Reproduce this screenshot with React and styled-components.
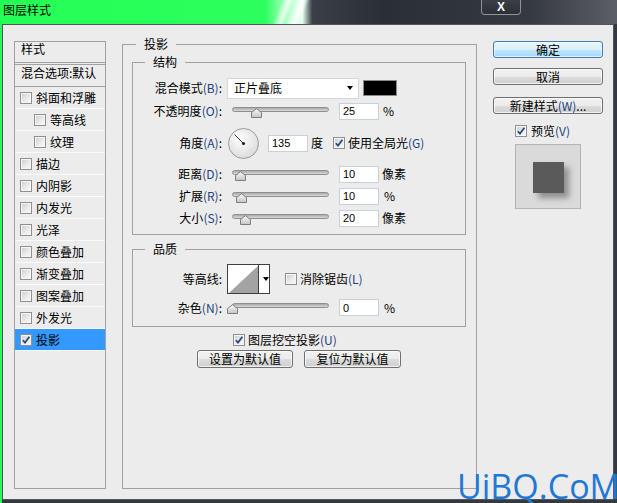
import React from 'react'
import styled, { createGlobalStyle } from 'styled-components'

const GlobalStyle = createGlobalStyle`
  html, body { margin: 0; padding: 0; background: #ececec; }
  body {
    font-family: "Noto Sans CJK SC", "Noto Sans", sans-serif;
    font-size: 12px;
    color: #000;
  }
`

const Window = styled.div`
  position: relative;
  width: 617px;
  height: 503px;
  display: flex;
  flex-direction: column;
  overflow: hidden;
  background: linear-gradient(to right, #2af55c 0 2px, #34383f 2px);
`

const TitleBar = styled.div`
  height: 24px;
  flex-shrink: 0;
  display: flex;
  align-items: flex-start;
  background:
    linear-gradient(112deg, transparent 0 45%, rgba(255,255,255,.75) 46.2%, transparent 47%, rgba(255,255,255,.9) 48.4%, transparent 49.4%),
    linear-gradient(to right, #24ff55 0, #2cff5d 43%, #9dffb6 46%, #e6fff0 49%, #3b3f46 50.6%, #2a2e35 62%, #353941 86%, #5c5f65 100%);
`

const Title = styled.div`
  padding: 3px 0 0 3px;
  line-height: 14px;
`

const CloseButton = styled.div`
  margin-left: auto;
  margin-right: 96px;
  width: 40px;
  height: 15px;
  box-sizing: border-box;
  border: 1px solid rgba(255,255,255,.45);
  border-top: none;
  border-radius: 0 0 4px 4px;
  background: linear-gradient(#3a3e45, #2b2f36);
  color: #fff;
  font: bold 12px "Liberation Sans", sans-serif;
  display: flex;
  align-items: center;
  justify-content: center;
`

const Body = styled.div`
  flex: 1;
  margin: 0 3px 3px 2px;
  border: 1px solid #50545b;
  background: #ececec;
  display: flex;
  gap: 16px;
  padding: 12px 10px 10px 11px;
  min-height: 0;
`

/* ---------- left list ---------- */

const StyleList = styled.div`
  width: 92px;
  margin-top: 4px;
  border: 1px solid #a0a0a0;
  box-sizing: border-box;
  display: flex;
  flex-direction: column;
`

const ListHeader = styled.div`
  height: 21px;
  box-sizing: border-box;
  border-bottom: 1px solid #a0a0a0;
  padding-left: 6px;
  line-height: 14px;
`

const BlendRow = styled.div`
  height: 23px;
  box-sizing: border-box;
  margin-top: 1px;
  border-top: 1px solid #a0a0a0;
  border-bottom: 1px solid #a0a0a0;
  padding: 1px 0 0 6px;
  line-height: 14px;
  white-space: nowrap;
  overflow: hidden;
`

const ListItem = styled.div`
  height: 22px;
  box-sizing: border-box;
  border-bottom: 1px solid #fafafa;
  display: flex;
  align-items: center;
  gap: 4px;
  padding-left: ${p => (p.$sub ? 19 : 5)}px;
  background: ${p => (p.$active ? '#3399ff' : 'transparent')};
  line-height: 14px;
`

/* ---------- checkbox ---------- */

const Box = styled.span`
  display: inline-flex;
  align-items: center;
  justify-content: center;
  width: 12px;
  height: 12px;
  box-sizing: border-box;
  flex-shrink: 0;
  border: 1px solid #8e8f8f;
  box-shadow: inset 0 0 0 1px #f6f6f6;
  background: linear-gradient(135deg, #c9ccd0 0%, #eceded 60%, #f7f7f7 100%);
`

const Checkbox = ({ checked }) => (
  <Box>
    {checked && (
      <svg width="10" height="10" viewBox="0 0 10 10">
        <path d="M1.8 5.2 L4 7.6 L8.4 1.8" fill="none" stroke="#27477d" strokeWidth="1.7" />
      </svg>
    )}
  </Box>
)

/* ---------- main panel ---------- */

const Group = styled.fieldset`
  margin: ${p => p.$mt || 0}px 0 0;
  padding: ${p => p.$pad || '0'};
  border: 1px solid #a0a0a0;
  min-width: 0;
  box-sizing: border-box;
`

const Legend = styled.legend`
  margin-left: ${p => p.$offset}px;
  padding: 0 8px;
  line-height: 14px;
  font-size: 12px;
`

const Main = styled(Group)`
  width: 355px;
  flex-shrink: 0;
`

const Row = styled.div`
  display: flex;
  align-items: center;
  height: ${p => p.$h || 22}px;
  line-height: 14px;
  white-space: nowrap;
`

const Label = styled.span`
  width: 89px;
  flex-shrink: 0;
  text-align: right;
  margin-right: 5px;
`

const Key = styled.span`
  color: #1f3f7a;
`

const Select = styled.div`
  width: 132px;
  height: 21px;
  box-sizing: border-box;
  border: 1px solid #d6d6d6;
  background: #fff;
  display: flex;
  align-items: center;
  padding: 0 5px 0 6px;
`

const Arrow = styled.span`
  margin-left: auto;
  width: 0;
  height: 0;
  border-left: 3px solid transparent;
  border-right: 3px solid transparent;
  border-top: 4px solid #000;
`

const Swatch = styled.div`
  width: 34px;
  height: 16px;
  box-sizing: border-box;
  margin-left: 4px;
  border: 1px solid #8a8a8a;
  background: #000;
`

const SliderWrap = styled.div`
  position: relative;
  width: 107px;
  height: 11px;
  flex-shrink: 0;
  margin-top: 2px;
`

const Track = styled.div`
  margin: 0 5px;
  height: 5px;
  box-sizing: border-box;
  border: 1px solid #8f8f8f;
  border-radius: 3px;
  background: linear-gradient(#a9a9a9, #dadada);
`

const Thumb = styled.svg`
  position: absolute;
  top: 1px;
`

const Slider = ({ pct }) => (
  <SliderWrap>
    <Track />
    <Thumb width="11" height="10" viewBox="0 0 11 10" style={{ left: 5 + pct * 0.97 - 5.5 }}>
      <defs>
        <linearGradient id="th" x1="0" y1="0" x2="0" y2="1">
          <stop offset="0" stopColor="#fbfbfb" />
          <stop offset="1" stopColor="#c4c4c4" />
        </linearGradient>
      </defs>
      <path d="M0.5 9.5 V4.5 L5.5 0.7 L10.5 4.5 V9.5 Z" fill="url(#th)" stroke="#7d7d7d" />
    </Thumb>
  </SliderWrap>
)

const Field = styled.input`
  width: 40px;
  height: 17px;
  box-sizing: border-box;
  margin-left: ${p => (p.$ml === undefined ? 5 : p.$ml)}px;
  border: 1px solid #c7d0dc;
  background: #fff;
  padding: 0 0 0 3px;
  font: 11px "Liberation Sans", sans-serif;
  color: #000;
  outline: none;
`

const Unit = styled.span`
  margin-left: ${p => p.$ml || 4}px;
`

const Dial = styled.svg`
  margin-left: 1px;
  flex-shrink: 0;
`

const CheckLabel = styled.label`
  display: flex;
  align-items: center;
  gap: 3px;
  margin-left: ${p => p.$ml || 0}px;
`

const Contour = styled.div`
  display: flex;
  height: 30px;
  box-sizing: border-box;
  border: 1px solid #3e3e3e;
  background: #fff;
`

const ContourArrow = styled.div`
  width: 10px;
  border-left: 1px solid #3e3e3e;
  display: flex;
  align-items: center;
  justify-content: center;
`

const KnockoutRow = styled(Row)`
  margin-top: 4px;
  padding-left: 101px;
`

const ButtonRow = styled.div`
  display: flex;
  justify-content: center;
  gap: 11px;
  margin-top: 1px;
`

const Button = styled.div`
  width: ${p => p.$w || 110}px;
  height: ${p => p.$h || 17}px;
  box-sizing: border-box;
  margin-top: ${p => p.$mt || 0}px;
  border: 1px solid ${p => (p.$primary ? '#3c7fb1' : '#707070')};
  border-radius: 3px;
  background: ${p =>
    p.$primary
      ? 'linear-gradient(#eaf6fd 0%, #d9f0fc 50%, #bee6fd 50%, #a7d9f5 100%)'
      : 'linear-gradient(#f2f2f2 0%, #ebebeb 50%, #dddddd 50%, #cfcfcf 100%)'};
  box-shadow: inset 0 0 0 1px ${p => (p.$primary ? 'rgba(255,255,255,.6)' : 'rgba(255,255,255,.7)')};
  display: flex;
  align-items: center;
  justify-content: center;
  line-height: 14px;
  white-space: nowrap;
`

/* ---------- right column ---------- */

const Side = styled.div`
  width: 110px;
  margin-top: 4px;
  display: flex;
  flex-direction: column;
`

const PreviewToggle = styled(CheckLabel)`
  margin: 10px 0 0 22px;
  height: 14px;
  gap: 4px;
  line-height: 14px;
`

const Preview = styled.div`
  margin: 6px 0 0 22px;
  width: 66px;
  height: 65px;
  box-sizing: border-box;
  border: 1px solid #b4b4b4;
  background: #dadada;
  display: flex;
  align-items: center;
  justify-content: center;
`

const PreviewSquare = styled.div`
  width: 31px;
  height: 31px;
  margin-top: 2px;
  background: #5a5a5a;
  box-shadow: 5px 5px 6px rgba(0, 0, 0, 0.35);
`

const Watermark = styled.div`
  position: absolute;
  left: 457px;
  top: 470px;
  font: 34px/33px "Open Sans", sans-serif;
  color: #1f78d6;
  white-space: nowrap;
`

const listItems = [
  { name: '斜面和浮雕' },
  { name: '等高线', sub: true },
  { name: '纹理', sub: true },
  { name: '描边' },
  { name: '内阴影' },
  { name: '内发光' },
  { name: '光泽' },
  { name: '颜色叠加' },
  { name: '渐变叠加' },
  { name: '图案叠加' },
  { name: '外发光' },
  { name: '投影', active: true },
]

const sliders = [
  { label: '距离', key: 'D', pct: 9, value: '10', unit: '像素' },
  { label: '扩展', key: 'R', pct: 10, value: '10', unit: '%' },
  { label: '大小', key: 'S', pct: 14, value: '20', unit: '像素' },
]

const Lbl = ({ text, k }) => (
  <Label>
    {text}
    {k && <Key>({k})</Key>}:
  </Label>
)

export default function App() {
  return (
    <Window>
      <GlobalStyle />
      <TitleBar>
        <Title>图层样式</Title>
        <CloseButton>X</CloseButton>
      </TitleBar>
      <Body>
        <StyleList>
          <ListHeader>样式</ListHeader>
          <BlendRow>混合选项:默认</BlendRow>
          {listItems.map(it => (
            <ListItem key={it.name} $sub={it.sub} $active={it.active}>
              <Checkbox checked={it.active} />
              <span>{it.name}</span>
            </ListItem>
          ))}
        </StyleList>

        <Main $pad="0 10px 0 9px">
          <Legend $offset={4}>投影</Legend>

          <Group $mt={4} $pad="8px 0 5px 0">
            <Legend $offset={12}>结构</Legend>
            <Row>
              <Lbl text="混合模式" k="B" />
              <Select>
                正片叠底
                <Arrow />
              </Select>
              <Swatch />
            </Row>
            <Row $h={24}>
              <Lbl text="不透明度" k="O" />
              <Slider pct={25} />
              <Field readOnly value="25" />
              <Unit>%</Unit>
            </Row>
            <Row $h={40}>
              <Lbl text="角度" k="A" />
              <Dial width="31" height="31" viewBox="0 0 31 31">
                <defs>
                  <radialGradient id="dg" cx="0.4" cy="0.35" r="0.7">
                    <stop offset="0" stopColor="#ffffff" />
                    <stop offset="1" stopColor="#d9d9d9" />
                  </radialGradient>
                </defs>
                <circle cx="15.5" cy="15.5" r="15" fill="url(#dg)" stroke="#9a9a9a" />
                <line x1="15.5" y1="15.5" x2="6.5" y2="6.5" stroke="#333" strokeWidth="1" />
                <circle cx="15.5" cy="15.5" r="1.6" fill="#222" />
              </Dial>
              <Field readOnly value="135" $ml={9} />
              <Unit $ml={3}>度</Unit>
              <CheckLabel $ml={10}>
                <Checkbox checked />
                <span>使用全局光<Key>(G)</Key></span>
              </CheckLabel>
            </Row>
            {sliders.map(s => (
              <Row key={s.key}>
                <Lbl text={s.label} k={s.key} />
                <Slider pct={s.pct} />
                <Field readOnly value={s.value} />
                <Unit $ml={s.unit === '%' ? 5 : 3}>{s.unit}</Unit>
              </Row>
            ))}
          </Group>

          <Group $mt={7} $pad="6px 0 7px 0">
            <Legend $offset={12}>品质</Legend>
            <Row $h={34}>
              <Lbl text="等高线" />
              <Contour>
                <svg width="30" height="28" viewBox="0 0 30 28">
                  <polygon points="1,28 30,1 30,28" fill="#a3a3a3" />
                </svg>
                <ContourArrow>
                  <Arrow />
                </ContourArrow>
              </Contour>
              <CheckLabel $ml={15}>
                <Checkbox />
                <span>消除锯齿<Key>(L)</Key></span>
              </CheckLabel>
            </Row>
            <Row $h={23}>
              <Lbl text="杂色" k="N" />
              <Slider pct={0} />
              <Field readOnly value="0" />
              <Unit $ml={5}>%</Unit>
            </Row>
          </Group>

          <KnockoutRow $h={18}>
            <CheckLabel>
              <Checkbox checked />
              <span>图层挖空投影<Key>(U)</Key></span>
            </CheckLabel>
          </KnockoutRow>
          <ButtonRow>
            <Button $w={96} $h={18}>设置为默认值</Button>
            <Button $w={97} $h={18}>复位为默认值</Button>
          </ButtonRow>
        </Main>

        <Side>
          <Button $primary>确定</Button>
          <Button $mt={10}>取消</Button>
          <Button $mt={12}>新建样式<Key>(W)</Key>...</Button>
          <PreviewToggle>
            <Checkbox checked />
            <span>预览<Key>(V)</Key></span>
          </PreviewToggle>
          <Preview>
            <PreviewSquare />
          </Preview>
        </Side>
      </Body>
      <Watermark>UiBQ.CoM</Watermark>
    </Window>
  )
}
